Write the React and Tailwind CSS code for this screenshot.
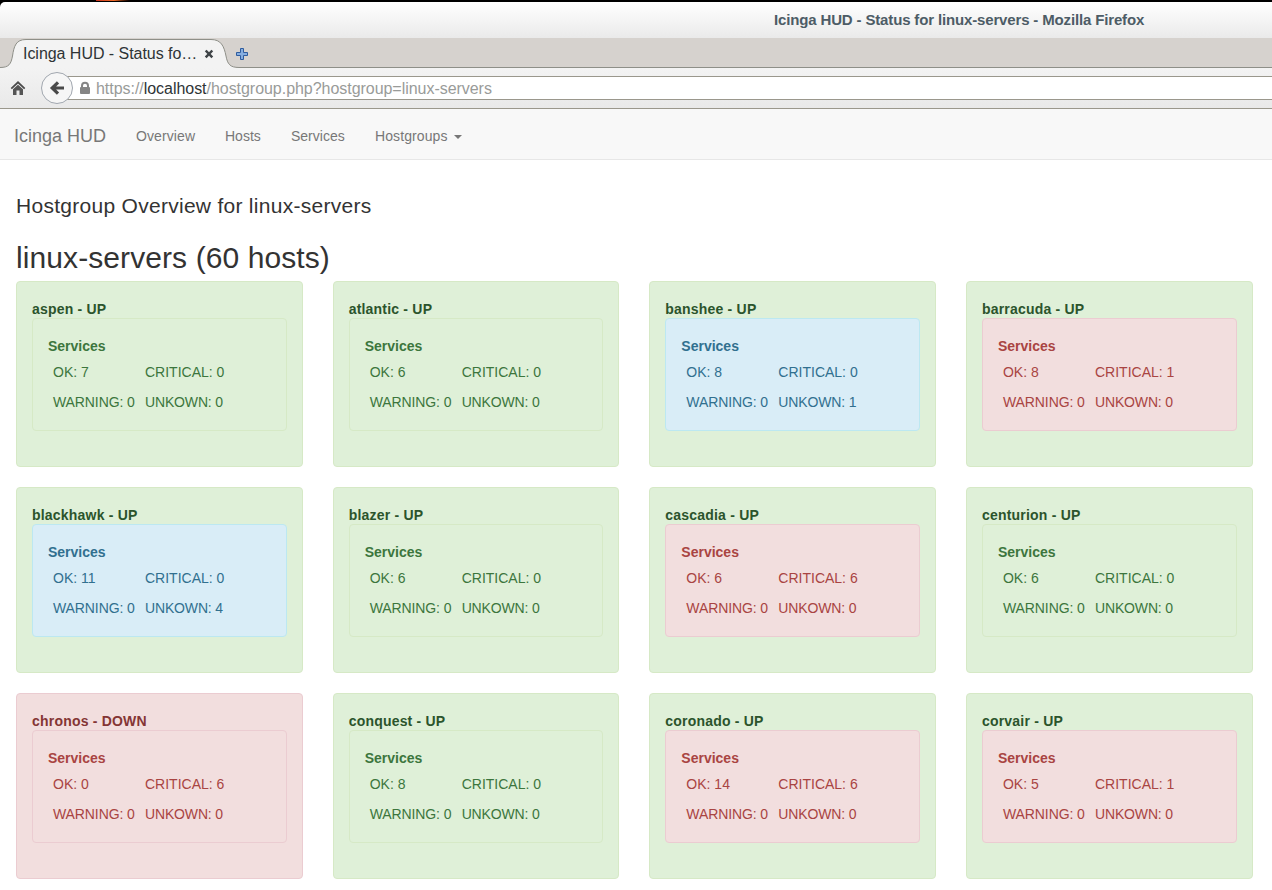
const TONES = {
  ok: {
    box: "border-[#d6e9c6] bg-[#dff0d8] text-[#3c763d]",
    link: "text-[#2b542c]",
  },
  info: {
    box: "border-[#bce8f1] bg-[#d9edf7] text-[#31708f]",
    link: "text-[#245269]",
  },
  bad: {
    box: "border-[#ebccd1] bg-[#f2dede] text-[#a94442]",
    link: "text-[#843534]",
  },
};

const HOSTS = [
  { name: "aspen", state: "UP", tone: "ok", services: [7, 0, 0, 0] },
  { name: "atlantic", state: "UP", tone: "ok", services: [6, 0, 0, 0] },
  { name: "banshee", state: "UP", tone: "info", services: [8, 0, 0, 1] },
  { name: "barracuda", state: "UP", tone: "bad", services: [8, 1, 0, 0] },
  { name: "blackhawk", state: "UP", tone: "info", services: [11, 0, 0, 4] },
  { name: "blazer", state: "UP", tone: "ok", services: [6, 0, 0, 0] },
  { name: "cascadia", state: "UP", tone: "bad", services: [6, 6, 0, 0] },
  { name: "centurion", state: "UP", tone: "ok", services: [6, 0, 0, 0] },
  { name: "chronos", state: "DOWN", tone: "bad", services: [0, 6, 0, 0] },
  { name: "conquest", state: "UP", tone: "ok", services: [8, 0, 0, 0] },
  { name: "coronado", state: "UP", tone: "bad", services: [14, 6, 0, 0] },
  { name: "corvair", state: "UP", tone: "bad", services: [5, 1, 0, 0] },
];

function HostCard({ host }) {
  const outer = host.state === "UP" ? TONES.ok : TONES.bad;
  const inner = TONES[host.tone];
  const [ok, critical, warning, unknown] = host.services;
  return (
    <section className={`h-[186px] rounded border px-[15px] pt-4 ${outer.box}`}>
      <h4 className={`h-5 pt-px text-sm font-bold tracking-[0.2px] ${outer.link}`}>
        {host.name} - {host.state}
      </h4>
      <div className={`h-[113px] rounded border px-[15px] pt-[17px] ${inner.box}`}>
        <h5 className="h-[21px] text-sm font-bold">Services</h5>
        <div className="grid grid-cols-[92px_1fr] pl-[5px] text-sm leading-[30px] whitespace-nowrap">
          <span>OK: {ok}</span>
          <span>CRITICAL: {critical}</span>
          <span className="tracking-[-0.100px]">WARNING: {warning}</span>
          <span className="tracking-[-0.150px]">UNKOWN: {unknown}</span>
        </div>
      </div>
    </section>
  );
}

function TabStrip() {
  return (
    <div className="relative h-[30px] bg-[#d6d2ce]">
      <svg className="absolute left-0 top-0" width="1272" height="30" viewBox="0 0 1272 30">
        <path
          d="M0 29.5C9 29.5 11 26 12.5 18C14 8 16 1.5 26 1.5H211C221 1.5 224 8 226 18C227.500 26 230 29.500 239 29.500V30H0Z"
          fill="#f3f3f3"
        />
        <path
          d="M0 29.5C9 29.5 11 26 12.5 18C14 8 16 1.5 26 1.5H211C221 1.5 224 8 226 18C227.500 26 230 29.500 239 29.500H1272"
          fill="none"
          stroke="#8e8f88"
        />
        <path d="M205.700 12.500l6.600 6.800M212.300 12.500l-6.600 6.800" stroke="#3e4346" strokeWidth="2.500" fill="none" />
        <path
          d="M240.500 10.500h3v4h4v3h-4v4h-3v-4h-4v-3h4z"
          fill="#86aee0"
          stroke="#2f5c9e"
          strokeLinejoin="round"
        />
      </svg>
      <span className="relative block pl-[23px] pt-[4px] text-[16px] leading-6 tracking-[-0.040px] text-[#2e3436]">
        Icinga HUD - Status fo…
      </span>
    </div>
  );
}

function Toolbar() {
  return (
    <div className="relative h-[41px] border-b border-[#9a978c] bg-linear-to-b from-[#f3f3f3] to-[#e9e9e9] pt-2">
      <div className="ml-[57px] flex h-6 items-center border-y border-[#9a978c] bg-white pt-0.5 pl-[39px] text-base leading-5 tracking-[-0.040px] text-[#999b99]">
        <span>
          https://<span className="text-[#2e3436]">localhost</span>/hostgroup.php?hostgroup=linux-servers
        </span>
      </div>
      <svg className="absolute left-0 top-0" width="96" height="40" viewBox="0 68 96 40">
        <path d="M11.300 88.700L18 82.300L24.700 88.700" fill="none" stroke="#4a4a4a" strokeWidth="1.700" />
        <path d="M13 89.300L18 84.700L23 89.300V95H19.500V90.500H16.500V95H13Z" fill="#555" />
        <circle cx="57" cy="88" r="15.500" fill="#f6f6f6" stroke="#a1a7af" />
        <path d="M58 82.300L52.200 88L58 93.700M52.500 88H64" fill="none" stroke="#4a4a4a" strokeWidth="3.200" />
        <path d="M82 88V85.800a3 3 0 0 1 6 0V88" fill="none" stroke="#858585" strokeWidth="2" />
        <rect x="80" y="87" width="10" height="7" rx="1" fill="#858585" />
      </svg>
    </div>
  );
}

export default function App() {
  return (
    <div className="h-[890px] w-[1272px] overflow-hidden bg-white font-['Liberation_Sans',Arial,sans-serif]">
      <div className="h-[2px] bg-black">
        <div className="ml-24 h-px w-9 bg-linear-to-r from-[#c8321e] via-[#f06a28] to-black" />
      </div>
      <div className="bg-black">
        <div className="h-9 rounded-tl-[5px] bg-linear-to-b from-white to-[#eaeaea] pl-[774px] pt-[6px] text-[15px] leading-6 font-bold tracking-[-0.150px] text-[#4d5c66]">
          Icinga HUD - Status for linux-servers - Mozilla Firefox
        </div>
      </div>
      <TabStrip />
      <Toolbar />
      <nav className="flex h-[51px] items-center border-b border-[#e7e7e7] bg-[#f8f8f8] pt-[3px] text-sm text-[#777]">
        <span className="w-[122px] pl-[14px] text-lg">Icinga HUD</span>
        <span className="ml-[14px] w-[89px] tracking-[0.100px]">Overview</span>
        <span className="w-[66px]">Hosts</span>
        <span className="w-[84px]">Services</span>
        <span className="flex items-center gap-[6px] tracking-[0.100px]">
          Hostgroups
          <svg width="8" height="4" viewBox="0 0 8 4" className="mt-0.5">
            <path d="M0 0h8L4 4z" fill="#777" />
          </svg>
        </span>
      </nav>
      <main className="px-4 text-[#333]">
        <h1 className="pt-[31px] text-[21px] leading-[30px] tracking-[0.280px]">Hostgroup Overview for linux-servers</h1>
        <h2 className="mt-[20px] mb-[7px] text-[30px] leading-[33px] tracking-[0.090px]">linux-servers (60 hosts)</h2>
        <div className="grid w-[1236.660px] grid-cols-4 gap-x-[30px] gap-y-5">
          {HOSTS.map((host) => (
            <HostCard key={host.name} host={host} />
          ))}
        </div>
      </main>
    </div>
  );
}
